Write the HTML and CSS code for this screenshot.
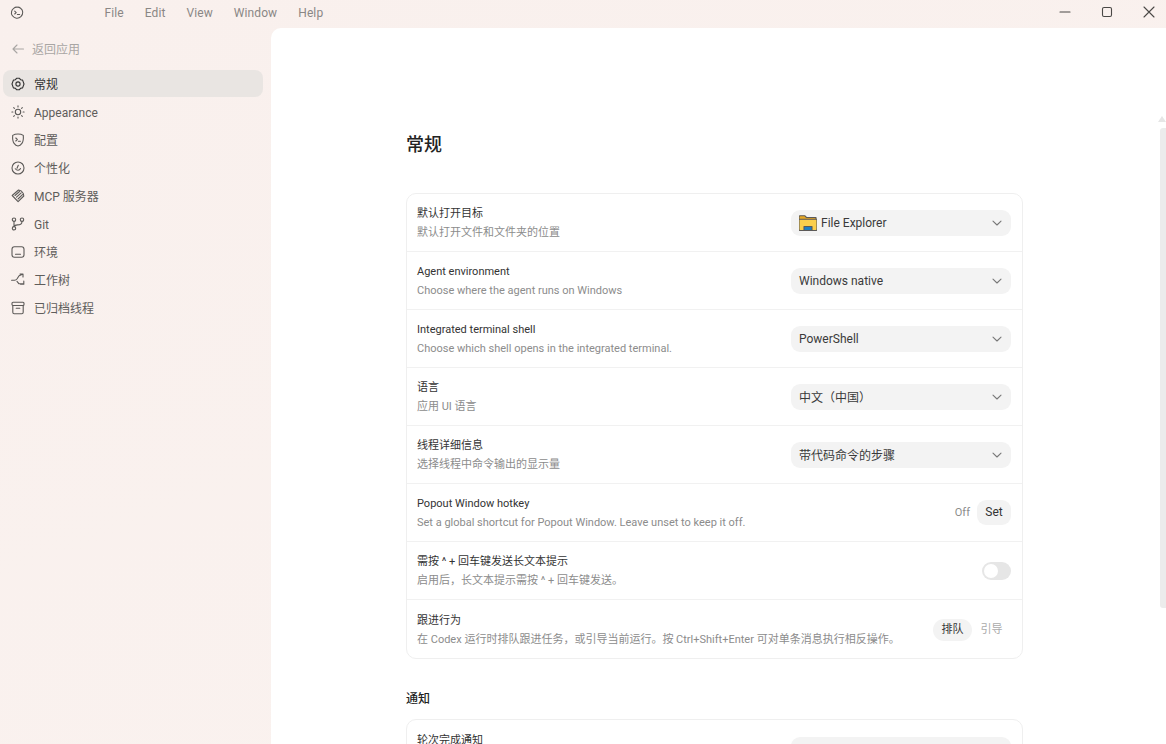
FILE: index.html
```html
<!doctype html>
<html lang="zh-CN">
<head>
<meta charset="utf-8">
<title>设置</title>
<link rel="stylesheet" href="styles.css">
</head>
<body>
	<div class="titlebar">
		<svg class="logo" width="14" height="14" viewBox="0 0 14 14"><path d="M7 1.200c1.200-.3 2.600.2 3.600 1 1.300.9 2.100 2.400 2.100 3.900.1 1.700-.5 3.300-1.800 4.500-1.200 1.200-2.900 1.800-4.500 1.600-1.600-.2-3-1.100-3.900-2.400C1.500 8.500 1.100 6.900 1.600 5.300 2.100 3.300 4.800.9 7 1.200z"/><path d="M4.700 5.200 6.200 6.700 4.700 8M7.400 8.500h2.200"/></svg>
		<ul class="menu">
			<li>File</li>
			<li>Edit</li>
			<li>View</li>
			<li>Window</li>
			<li>Help</li>
		</ul>
		<div class="win-btns">
			<svg width="42" height="24" viewBox="0 0 42 24"><path d="M16 12h10"/></svg>
			<svg width="42" height="24" viewBox="0 0 42 24"><rect x="16.500" y="7.500" width="9" height="9" rx="1.500"/></svg>
			<svg width="38" height="24" viewBox="-4 0 38 24"><path d="M12 7l10 10M22 7 12 17"/></svg>
		</div>
	</div>
	<div class="layout">
		<div class="sidebar">
			<div class="back">
				<svg width="14" height="14" viewBox="0 0 14 14"><path d="M12.500 7H2M6 3 2 7l4 4"/></svg>
				<span>返回应用</span>
			</div>
			<ul class="nav">
				<li class="current">
					<svg width="14" height="14" viewBox="0 0 14 14"><path d="M5.500 1.300h3l1.200 1.500 1.900.3 1.400 3.900-1.400 3.900-1.900.3-1.200 1.500h-3L4.300 11.200l-1.900-.3L1 7l1.400-3.900 1.900-.3z"/><circle cx="7" cy="7" r="2.100"/></svg>
					<span>常规</span>
				</li>
				<li>
					<svg width="14" height="14" viewBox="0 0 14 14"><circle cx="7" cy="7" r="2.700"/><path d="M7 .9v1M7 12.100v1M.9 7h1M12.100 7h1M2.700 2.700l.7.7M10.600 10.600l.7.7M2.700 11.300l.7-.7M10.600 3.400l.7-.7"/></svg>
					<span>Appearance</span>
				</li>
				<li>
					<svg width="14" height="14" viewBox="0 0 14 14"><path d="M7 1c2 0 3.900.5 5.300 1.400.3 3.800.2 6-1.400 8C9.900 11.800 8.500 12.800 7 13c-1.500-.2-2.900-1.200-3.900-2.600-1.600-2-1.700-4.200-1.400-8C3.100 1.500 5 1 7 1z"/><path d="M4.800 5 6.300 6.500 4.800 8M7.400 8.300h2"/></svg>
					<span>配置</span>
				</li>
				<li>
					<svg width="14" height="14" viewBox="0 0 14 14"><circle cx="7" cy="7" r="6"/><path d="M4.300 7.800c.8 1.100 1.700 1.500 2.700 1.500 1.100 0 2-.6 2.500-1.700M7.300 4.200 6 7.200"/></svg>
					<span>个性化</span>
				</li>
				<li>
					<svg width="14" height="14" viewBox="0 0 14 14"><path d="M1.200 6.500 7.500 1l2.800 1 2 2.500.5 2.500-5.700 5.600z"/><path d="M4 6.500l4.500-4M5.500 8.200l4.700-4.300M7 10l4.500-4.300"/></svg>
					<span>MCP 服务器</span>
				</li>
				<li>
					<svg width="14" height="14" viewBox="0 0 14 14"><circle cx="3" cy="2.700" r="1.700"/><circle cx="3" cy="11.300" r="1.700"/><circle cx="11" cy="2.700" r="1.700"/><path d="M3 4.400v5.200M11 4.400c0 2.600-2 3.400-4.500 3.500-1.800.1-3 .4-3.500 1.700"/></svg>
					<span>Git</span>
				</li>
				<li>
					<svg width="14" height="14" viewBox="0 0 14 14"><rect x="1" y="1.800" width="12" height="10.400" rx="2.400"/><path d="M4.500 9.300h5"/></svg>
					<span>环境</span>
				</li>
				<li>
					<svg width="14" height="14" viewBox="0 0 14 14"><path d="M.6 7.200h3c1.200 0 1.800-.5 2.500-1.500l2-3 3.400-1.500M9 1h3v3M6 8.400l2 2.400h4M12.800 8v3.300h-3.200"/></svg>
					<span>工作树</span>
				</li>
				<li>
					<svg width="14" height="14" viewBox="0 0 14 14"><rect x="1" y="1.300" width="12" height="3.200" rx="1"/><path d="M1.800 4.500v6.800c0 .8.600 1.400 1.400 1.400h7.600c.8 0 1.400-.6 1.400-1.400V4.500M5.200 7.300h3.600"/></svg>
					<span>已归档线程</span>
				</li>
			</ul>
		</div>
		<div class="main">
			<div class="content">
				<h1>常规</h1>
				<div class="card">
					<div class="row">
						<div class="info">
							<p class="name">默认打开目标</p>
							<p class="desc">默认打开文件和文件夹的位置</p>
						</div>
						<div class="select">
							<svg class="folder" width="18" height="16" viewBox="0 0 18 16"><path fill="#e8a820" d="M0 2c0-.8.500-1.300 1.300-1.300h4.400L7.500 2.500H17V5H0z"/><path fill="#fbcf4d" d="M0 4.200h18v10.300c0 .6-.5 1-1 1H1c-.5 0-1-.4-1-1z"/><path fill="#1f7fc4" d="M5 11.500h8v4H5z"/></svg>
							<span>File Explorer</span>
							<svg class="chevron" width="12" height="12" viewBox="0 0 12 12"><path d="M2 4.200 6 8l4-3.800"/></svg>
						</div>
					</div>
					<div class="row">
						<div class="info">
							<p class="name">Agent environment</p>
							<p class="desc">Choose where the agent runs on Windows</p>
						</div>
						<div class="select">
							<span>Windows native</span>
							<svg class="chevron" width="12" height="12" viewBox="0 0 12 12"><path d="M2 4.200 6 8l4-3.800"/></svg>
						</div>
					</div>
					<div class="row">
						<div class="info">
							<p class="name">Integrated terminal shell</p>
							<p class="desc">Choose which shell opens in the integrated terminal.</p>
						</div>
						<div class="select">
							<span>PowerShell</span>
							<svg class="chevron" width="12" height="12" viewBox="0 0 12 12"><path d="M2 4.200 6 8l4-3.800"/></svg>
						</div>
					</div>
					<div class="row">
						<div class="info">
							<p class="name">语言</p>
							<p class="desc">应用 UI 语言</p>
						</div>
						<div class="select">
							<span>中文（中国）</span>
							<svg class="chevron" width="12" height="12" viewBox="0 0 12 12"><path d="M2 4.200 6 8l4-3.800"/></svg>
						</div>
					</div>
					<div class="row">
						<div class="info">
							<p class="name">线程详细信息</p>
							<p class="desc">选择线程中命令输出的显示量</p>
						</div>
						<div class="select">
							<span>带代码命令的步骤</span>
							<svg class="chevron" width="12" height="12" viewBox="0 0 12 12"><path d="M2 4.200 6 8l4-3.800"/></svg>
						</div>
					</div>
					<div class="row">
						<div class="info">
							<p class="name">Popout Window hotkey</p>
							<p class="desc">Set a global shortcut for Popout Window. Leave unset to keep it off.</p>
						</div>
						<div class="hotkey">
							<span class="off">Off</span>
							<span class="set">Set</span>
						</div>
					</div>
					<div class="row">
						<div class="info">
							<p class="name">需按 ^ + 回车键发送长文本提示</p>
							<p class="desc">启用后，长文本提示需按 ^ + 回车键发送。</p>
						</div>
						<div class="toggle"><i></i></div>
					</div>
					<div class="row">
						<div class="info">
							<p class="name">跟进行为</p>
							<p class="desc">在 Codex 运行时排队跟进任务，或引导当前运行。按 Ctrl+Shift+Enter 可对单条消息执行相反操作。</p>
						</div>
						<div class="segment">
							<span class="on">排队</span>
							<span>引导</span>
						</div>
					</div>
				</div>
				<h2>通知</h2>
				<div class="card">
					<div class="row">
						<div class="info">
							<p class="name">轮次完成通知</p>
							<p class="desc">设置何时发送通知</p>
						</div>
						<div class="select">
							<span>仅当应用非焦点时</span>
							<svg class="chevron" width="12" height="12" viewBox="0 0 12 12"><path d="M2 4.200 6 8l4-3.800"/></svg>
						</div>
					</div>
				</div>
			</div>
			<div class="scroll-up"></div>
			<div class="scroll-thumb"></div>
		</div>
	</div>
</body>
</html>
```

FILE: styles.css
```css
*{
	margin: 0;
	padding: 0;
	box-sizing: border-box;
}
html,body{
	height: 100%;
	overflow: hidden;
}
body{
	background: linear-gradient(160deg, #f9f0ed, #faf2ef);
	font-family: Roboto, "Noto Sans CJK SC", sans-serif;
	color: #333;
	display: flex;
	flex-direction: column;
}
svg{
	fill: none;
	stroke: #5c5a58;
	stroke-width: 1.1;
	stroke-linecap: round;
	stroke-linejoin: round;
	flex: none;
}
ul{
	list-style: none;
}
.titlebar{
	height: 28px;
	flex: none;
	display: flex;
	align-items: center;
	padding-left: 10px;
}
.logo{
	margin-top: -3px;
}
.menu{
	display: flex;
	margin-left: 70px;
	margin-top: -2px;
}
.menu li{
	font-size: 12px;
	letter-spacing: .1px;
	color: #8a8785;
	padding: 0 10.500px;
}
.win-btns{
	margin-left: auto;
	display: flex;
	margin-top: -4px;
}
.win-btns svg{
	stroke: #4a4846;
}
.layout{
	flex: 1;
	display: flex;
	min-height: 0;
}
.sidebar{
	width: 271px;
	flex: none;
	padding: 7px 8px 0 3px;
}
.back{
	height: 28px;
	display: flex;
	align-items: center;
	gap: 7px;
	padding-left: 8px;
	font-size: 12px;
	line-height: 14px;
	color: #a9a6a4;
}
.back span{
	margin-top: 2px;
}
.back svg{
	stroke: #a9a6a4;
}
.nav{
	margin-top: 7px;
}
.nav li{
	height: 28px;
	display: flex;
	align-items: center;
	gap: 9px;
	padding-left: 8px;
	font-size: 12px;
	line-height: 14px;
	color: #5f5d5b;
	border-radius: 8px;
}
.nav li span{
	margin-top: 2px;
}
.nav li.current{
	height: 27px;
	margin-bottom: 1px;
	background-color: #e9e5e2;
	color: #333;
}
.nav li.current svg{
	stroke: #333;
}
.main{
	flex: 1;
	position: relative;
	background-color: #fff;
	border-top-left-radius: 10px;
	padding-right: 8px;
	overflow: hidden;
}
.content{
	width: 617px;
	margin: 0 auto;
	padding-top: 105px;
}
h1{
	font-size: 18px;
	line-height: 24px;
	font-weight: 500;
	color: #222;
	margin-bottom: 36px;
}
h2{
	font-size: 12px;
	line-height: 18px;
	font-weight: 500;
	color: #222;
	margin: 31px 0 11px;
}
.card{
	border: 1px solid #efefef;
	border-radius: 10px;
}
.row{
	height: 58px;
	display: flex;
	align-items: center;
	justify-content: space-between;
	padding: 0 11px 0 10px;
	border-bottom: 1px solid #f1f1f1;
}
.row:last-child{
	padding-top: 2px;
	border-bottom: 0;
}
.name{
	font-size: 11px;
	line-height: 19px;
	color: #333;
}
.desc{
	font-size: 11px;
	line-height: 19px;
	color: #8c8c8c;
}
.select{
	width: 220px;
	height: 26px;
	display: flex;
	align-items: center;
	gap: 4px;
	padding: 0 8px;
	background-color: #f3f3f3;
	border-radius: 9px;
	font-size: 12px;
	color: #3a3a3a;
}
.chevron{
	margin-left: auto;
	margin-right: 0;
	stroke: #777;
}
.hotkey{
	display: flex;
	align-items: center;
	gap: 7px;
	font-size: 12px;
}
.off{
	font-size: 11px;
	color: #8c8c8c;
}
.set{
	width: 34px;
	height: 25px;
	line-height: 25px;
	text-align: center;
	background-color: #f3f3f3;
	border-radius: 9px;
	color: #333;
}
.toggle{
	width: 29px;
	height: 18px;
	padding: 2px;
	background-color: #e6e6e6;
	border-radius: 9px;
}
.toggle i{
	display: block;
	width: 14px;
	height: 14px;
	background-color: #fff;
	border-radius: 50%;
}
.segment{
	display: flex;
	align-items: center;
	font-size: 11px;
	color: #aaa;
}
.segment span{
	width: 39px;
	height: 22px;
	line-height: 22px;
	text-align: center;
	border-radius: 11px;
}
.segment .on{
	background-color: #f3f3f3;
	color: #333;
}
.scroll-up{
	position: absolute;
	right: 0;
	top: 88px;
	width: 0;
	height: 0;
	border-left: 4px solid transparent;
	border-right: 4px solid transparent;
	border-bottom: 6px solid #e6e6e6;
}
.scroll-thumb{
	position: absolute;
	right: 0;
	top: 100px;
	width: 6px;
	height: 480px;
	background-color: #ececec;
	border-radius: 3px 0 0 3px;
}
```
